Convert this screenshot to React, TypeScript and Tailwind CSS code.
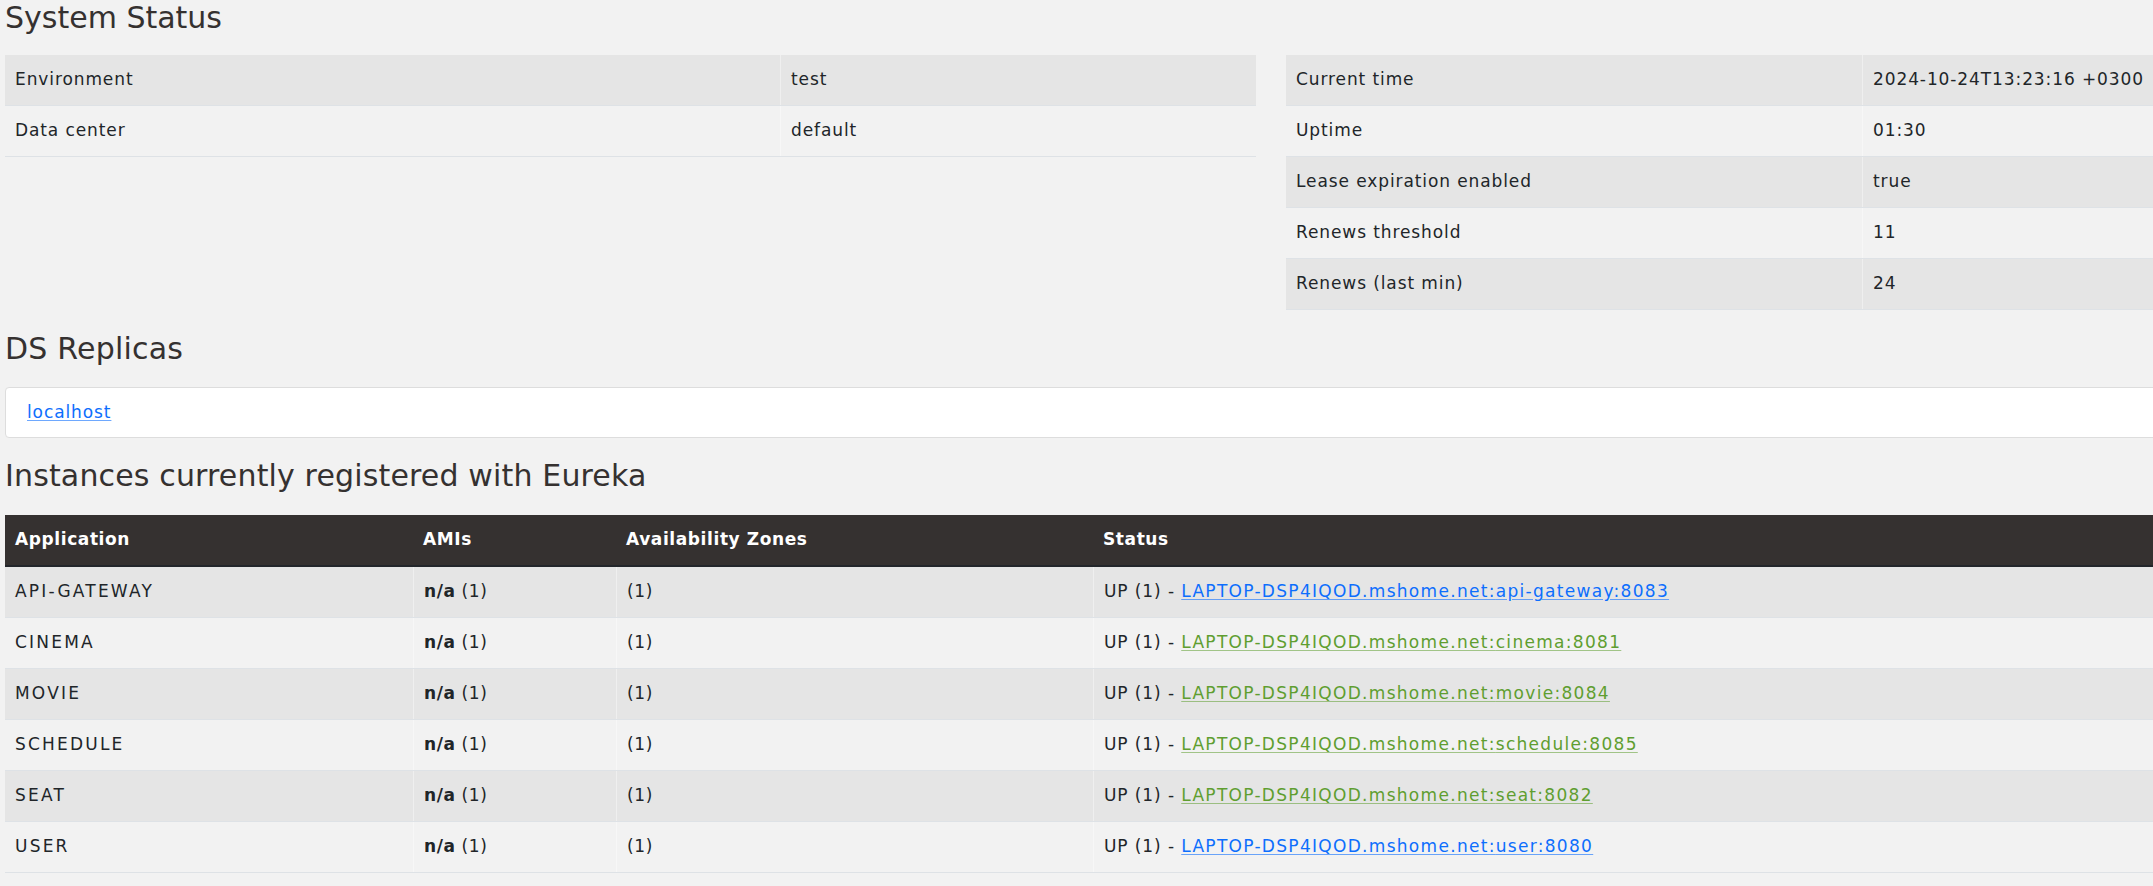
import React from "react";

const leftRows = [
  ["Environment", "test"],
  ["Data center", "default"],
];
const rightRows = [
  ["Current time", "2024-10-24T13:23:16 +0300"],
  ["Uptime", "01:30"],
  ["Lease expiration enabled", "true"],
  ["Renews threshold", "11"],
  ["Renews (last min)", "24"],
];
const apps: [string, string, boolean][] = [
  ["API-GATEWAY", "api-gateway:8083", false],
  ["CINEMA", "cinema:8081", true],
  ["MOVIE", "movie:8084", true],
  ["SCHEDULE", "schedule:8085", true],
  ["SEAT", "seat:8082", true],
  ["USER", "user:8080", false],
];

function KVTable({ rows, cols }: { rows: string[][]; cols: string }) {
  return (
    <div className="flex flex-col">
      {rows.map((r, i) => (
        <div
          key={i}
          className={`grid ${cols} h-[51px] border-b border-[#dee2e6] ${i % 2 === 0 ? "bg-[#e5e5e5]" : ""}`}
        >
          <div className="flex items-center px-[10px]">{r[0]}</div>
          <div className="flex items-center px-[10px] border-l border-white/40">{r[1]}</div>
        </div>
      ))}
    </div>
  );
}

export default function App() {
  return (
    <div
      className="w-[2153px] min-h-[886px] overflow-hidden bg-[#f2f2f2] text-[#212529] text-[17px] tracking-[0.9px]"
      style={{ fontFamily: '"DejaVu Sans", Verdana, sans-serif' }}
    >
      <div className="ml-[5px] w-[2532px] flex flex-col">
        <h1 className="mt-[3px] text-[30px] leading-[30px] tracking-normal text-[#353130]">System Status</h1>
        <div className="mt-[22px] grid grid-cols-[1251px_1251px] gap-[30px] items-start">
          <KVTable rows={leftRows} cols="grid-cols-[775px_1fr]" />
          <KVTable rows={rightRows} cols="grid-cols-[576px_1fr]" />
        </div>
        <h1 className="mt-[24px] text-[30px] leading-[30px] tracking-[0.2px] text-[#353130]">DS Replicas</h1>
        <div className="mt-[23px] h-[51px] bg-white border border-[#dddddd] rounded-[4px] flex items-center px-[21px]">
          <a href="#" className="text-[#0d6efd] underline decoration-[#0d6efd]/60 underline-offset-2">localhost</a>
        </div>
        <h1 className="mt-[23px] text-[30px] leading-[30px] tracking-[0.15px] text-[#353130]">
          Instances currently registered with Eureka
        </h1>
        <div className="mt-[24px] flex flex-col">
          <div className="grid grid-cols-[408px_203px_477px_1fr] h-[52px] bg-[#353130] border-b-2 border-[#23262b] text-white font-bold tracking-[0.6px]">
            <div className="flex items-center px-[10px]">Application</div>
            <div className="flex items-center px-[10px]">AMIs</div>
            <div className="flex items-center px-[10px]">Availability Zones</div>
            <div className="flex items-center px-[10px]">Status</div>
          </div>
          {apps.map(([name, url, green], i) => (
            <div
              key={name}
              className={`grid grid-cols-[408px_203px_477px_1fr] h-[51px] border-b border-[#dee2e6] ${i % 2 === 0 ? "bg-[#e5e5e5]" : ""}`}
            >
              <div className="flex items-center px-[10px] tracking-[2.2px]">{name}</div>
              <div className="flex items-center px-[10px] border-l border-white/40 tracking-[0.6px]">
                <b>n/a</b>&nbsp;(1)
              </div>
              <div className="flex items-center px-[10px] border-l border-white/40 tracking-[0.6px]">(1)</div>
              <div className="flex items-center px-[10px] border-l border-white/40">
                UP (1) -&nbsp;
                <a
                  href="#"
                  className={
                    green
                      ? "text-[#5f9e30] underline decoration-[#5f9e30]/55 underline-offset-2 tracking-[1.3px]"
                      : "text-[#0d6efd] underline decoration-[#0d6efd]/60 underline-offset-2 tracking-[1.3px]"
                  }
                >
                  LAPTOP-DSP4IQOD.mshome.net:{url}
                </a>
              </div>
            </div>
          ))}
        </div>
      </div>
    </div>
  );
}
